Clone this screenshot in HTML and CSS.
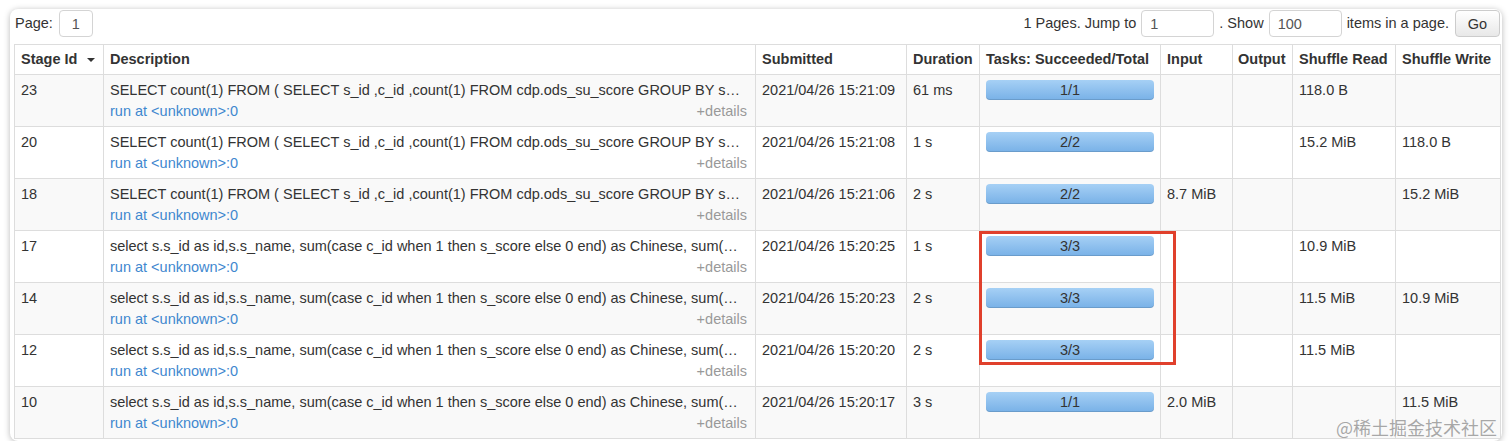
FILE: index.html
```html
<!DOCTYPE html>
<html>
<head>
<meta charset="utf-8">
<link rel="stylesheet" href="styles.css">
</head>
<body>
<div class="card">
  <div class="topbar">
    <div class="pager-left">
      <span class="lbl">Page:</span>
      <input class="in in-page" type="text" value="1">
    </div>
    <div class="pager-right">
      <span class="lbl">1 Pages. Jump to</span>
      <input class="in in-wide" type="text" value="1">
      <span class="lbl">. Show</span>
      <input class="in in-wide" type="text" value="100">
      <span class="lbl">items in a page.</span>
      <button class="go">Go</button>
    </div>
  </div>
  <table class="stages">
    <colgroup>
      <col class="c-id"><col class="c-desc"><col class="c-sub"><col class="c-dur"><col class="c-tasks"><col class="c-in"><col class="c-out"><col class="c-sr"><col class="c-sw">
    </colgroup>
    <thead>
      <tr>
        <th>Stage Id <span class="caret"></span></th>
        <th>Description</th>
        <th>Submitted</th>
        <th>Duration</th>
        <th>Tasks: Succeeded/Total</th>
        <th>Input</th>
        <th class="right-th">Output</th>
        <th>Shuffle Read</th>
        <th>Shuffle Write</th>
      </tr>
    </thead>
    <tbody>
      <tr>
        <td>23</td>
        <td><div class="desc">SELECT count(1) FROM ( SELECT s_id ,c_id ,count(1) FROM cdp.ods_su_score GROUP BY s…</div><div class="sub"><a class="run">run at &lt;unknown&gt;:0</a><span class="det">+details</span></div></td>
        <td>2021/04/26 15:21:09</td>
        <td>61 ms</td>
        <td><div class="bar">1/1</div></td>
        <td></td><td></td>
        <td>118.0 B</td>
        <td></td>
      </tr>
      <tr>
        <td>20</td>
        <td><div class="desc">SELECT count(1) FROM ( SELECT s_id ,c_id ,count(1) FROM cdp.ods_su_score GROUP BY s…</div><div class="sub"><a class="run">run at &lt;unknown&gt;:0</a><span class="det">+details</span></div></td>
        <td>2021/04/26 15:21:08</td>
        <td>1 s</td>
        <td><div class="bar">2/2</div></td>
        <td></td><td></td>
        <td>15.2 MiB</td>
        <td>118.0 B</td>
      </tr>
      <tr>
        <td>18</td>
        <td><div class="desc">SELECT count(1) FROM ( SELECT s_id ,c_id ,count(1) FROM cdp.ods_su_score GROUP BY s…</div><div class="sub"><a class="run">run at &lt;unknown&gt;:0</a><span class="det">+details</span></div></td>
        <td>2021/04/26 15:21:06</td>
        <td>2 s</td>
        <td><div class="bar">2/2</div></td>
        <td>8.7 MiB</td><td></td>
        <td></td>
        <td>15.2 MiB</td>
      </tr>
      <tr>
        <td>17</td>
        <td><div class="desc">select s.s_id as id,s.s_name, sum(case c_id when 1 then s_score else 0 end) as Chinese, sum(…</div><div class="sub"><a class="run">run at &lt;unknown&gt;:0</a><span class="det">+details</span></div></td>
        <td>2021/04/26 15:20:25</td>
        <td>1 s</td>
        <td><div class="bar">3/3</div></td>
        <td></td><td></td>
        <td>10.9 MiB</td>
        <td></td>
      </tr>
      <tr>
        <td>14</td>
        <td><div class="desc">select s.s_id as id,s.s_name, sum(case c_id when 1 then s_score else 0 end) as Chinese, sum(…</div><div class="sub"><a class="run">run at &lt;unknown&gt;:0</a><span class="det">+details</span></div></td>
        <td>2021/04/26 15:20:23</td>
        <td>2 s</td>
        <td><div class="bar">3/3</div></td>
        <td></td><td></td>
        <td>11.5 MiB</td>
        <td>10.9 MiB</td>
      </tr>
      <tr>
        <td>12</td>
        <td><div class="desc">select s.s_id as id,s.s_name, sum(case c_id when 1 then s_score else 0 end) as Chinese, sum(…</div><div class="sub"><a class="run">run at &lt;unknown&gt;:0</a><span class="det">+details</span></div></td>
        <td>2021/04/26 15:20:20</td>
        <td>2 s</td>
        <td><div class="bar">3/3</div></td>
        <td></td><td></td>
        <td>11.5 MiB</td>
        <td></td>
      </tr>
      <tr>
        <td>10</td>
        <td><div class="desc">select s.s_id as id,s.s_name, sum(case c_id when 1 then s_score else 0 end) as Chinese, sum(…</div><div class="sub"><a class="run">run at &lt;unknown&gt;:0</a><span class="det">+details</span></div></td>
        <td>2021/04/26 15:20:17</td>
        <td>3 s</td>
        <td><div class="bar">1/1</div></td>
        <td>2.0 MiB</td><td></td>
        <td></td>
        <td>11.5 MiB</td>
      </tr>
    </tbody>
  </table>
  <div class="highlight"></div>
  <div class="watermark">@稀土掘金技术社区</div>
</div>
</body>
</html>
```

FILE: styles.css
```css
* { box-sizing: border-box; }

html, body {
  margin: 0;
  padding: 0;
  background: #ffffff;
}

body {
  font-family: "Liberation Sans", Arial, "Noto Sans CJK SC", sans-serif;
  font-size: 14.5px;
  color: #333333;
  padding: 9px 10px 0 10px;
}

.card {
  position: relative;
  width: 1492px;
  background: #ffffff;
  border-radius: 8px;
  box-shadow: 0 1px 6px rgba(0, 0, 0, 0.28);
  padding: 1px 2px 2px 4px;
}

.topbar {
  display: flex;
  justify-content: space-between;
  align-items: center;
  height: 27px;
  margin-bottom: 7px;
}

.pager-left, .pager-right {
  display: flex;
  align-items: center;
  height: 27px;
}

.pager-left { padding-left: 1px; }

.lbl {
  line-height: 20px;
  margin-top: -2px;
}

.in {
  font-family: inherit;
  font-size: 14.5px;
  color: #555555;
  height: 27px;
  border: 1px solid #d4d4d4;
  border-radius: 4px;
  background: #ffffff;
  padding: 0 8px;
  outline: none;
}

.in-page {
  width: 34px;
  margin-left: 6px;
  text-align: center;
  padding: 0;
}

.in-wide {
  width: 73px;
  margin: 0 5px;
}

.go {
  font-family: inherit;
  font-size: 14.5px;
  color: #333333;
  width: 45px;
  height: 27px;
  margin-left: 6px;
  border: 1px solid #cccccc;
  border-radius: 4px;
  background: linear-gradient(#ffffff, #e8e8e8);
  padding: 0;
}

.stages {
  width: 1486px;
  table-layout: fixed;
  border-collapse: collapse;
  border: 1px solid #dddddd;
}

.c-id { width: 89px; }
.c-desc { width: 652px; }
.c-sub { width: 151px; }
.c-dur { width: 73px; }
.c-tasks { width: 181px; }
.c-in { width: 72px; }
.c-out { width: 60px; }
.c-sr { width: 103px; }
.c-sw { width: 105px; }

.stages th, .stages td {
  border: 1px solid #dddddd;
  text-align: left;
  vertical-align: top;
  line-height: 21px;
  white-space: nowrap;
  overflow: hidden;
}

.stages th {
  font-weight: bold;
  padding: 4px 6px 4px 6px;
  background: #ffffff;
}

.stages th.right-th { padding-left: 5px; padding-right: 4px; }

.stages td {
  padding: 5px 6px 4px 6px;
  height: 52px;
}

.stages tbody tr:nth-child(odd) td {
  background: #f9f9f9;
}

.caret {
  display: inline-block;
  width: 0;
  height: 0;
  margin-left: 6px;
  vertical-align: middle;
  border-left: 4px solid transparent;
  border-right: 4px solid transparent;
  border-top: 4px solid #333333;
}

.desc {
  white-space: nowrap;
  padding-right: 2px;
}

.sub {
  display: flex;
  justify-content: space-between;
}

.run {
  color: #3f88cf;
  text-decoration: none;
}

.det {
  color: #999999;
  padding-right: 2px;
}

.bar {
  height: 20px;
  border-radius: 4px;
  background: linear-gradient(#a6d0f5, #78b1e7);
  box-shadow: inset 0 -1px 0 rgba(0, 0, 0, 0.12);
  text-align: center;
  line-height: 20px;
  color: #333333;
}

.highlight {
  position: absolute;
  left: 969px;
  top: 222px;
  width: 197px;
  height: 134px;
  border: 3px solid #e0402c;
  pointer-events: none;
}

.watermark {
  position: absolute;
  right: 5px;
  bottom: 3px;
  font-family: "Noto Sans CJK SC", sans-serif;
  font-size: 18px;
  color: rgba(140, 140, 140, 0.75);
  line-height: 22px;
  pointer-events: none;
}
```
